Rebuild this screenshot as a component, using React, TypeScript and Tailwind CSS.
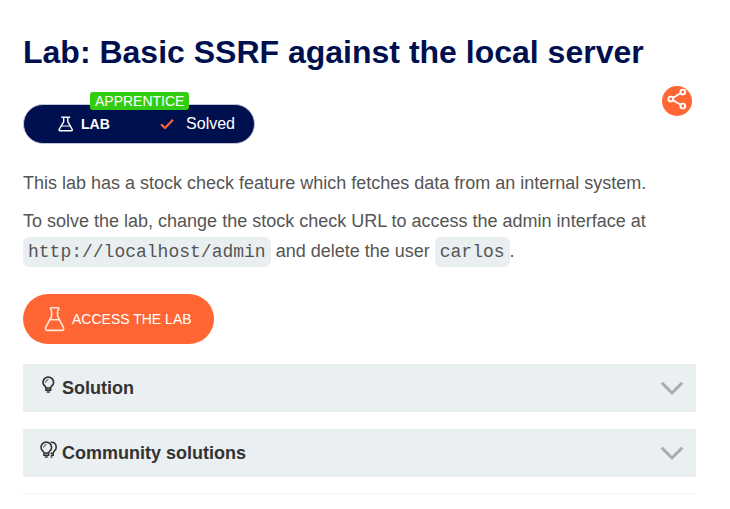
import { useState } from "react";
import type { ReactNode } from "react";

function SmallFlask() {
  return (
    <svg className="h-4 w-4 shrink-0" viewBox="0 0 16 16" fill="none" stroke="currentColor" strokeWidth="1.4" strokeLinejoin="round" strokeLinecap="round" aria-hidden="true">
      <path d="M3.8 1.2H11.6M5.7 1.2V5.6L1.2 13.4Q.8 14.8 2 14.8H13.4Q14.6 14.8 14.2 13.4L9.8 5.6V1.2" />
      <path d="M3.6 10H11.8" strokeWidth="1" />
    </svg>
  );
}

function LargeFlask() {
  return (
    <svg className="h-[26px] w-[22px] shrink-0" viewBox="0 0 22 26" fill="none" stroke="#ffe9df" strokeWidth="1.6" strokeLinejoin="round" strokeLinecap="round" aria-hidden="true">
      <path d="M7.2 1.8H14Q15 1.8 14.8 2.8L13.6 4.8V10.2L19.4 21.4Q20.4 24.2 17.8 24.4H3.4Q.8 24.2 1.8 21.4L7.6 10.2V4.8L6.4 2.8Q6.2 1.8 7.2 1.8ZM6 13.8H15.4" />
    </svg>
  );
}

function Bulb() {
  return (
    <svg className="h-[18px] w-[18px]" viewBox="0 0 18 18" fill="none" stroke="currentColor" strokeWidth="1.7" strokeLinecap="round" aria-hidden="true">
      <path d="M7 12C7 10.2 4 9.4 4 6.4A5.3 5.3 0 0 1 14.6 6.4C14.6 9.4 11.6 10.2 11.6 12ZM7 12.4V14.2H11.6V12.4M8.4 16H10.2" />
      <path d="M6.6 6.2Q6.8 4 9 3.6" strokeWidth="1" />
    </svg>
  );
}

function DoubleBulb() {
  return (
    <svg className="h-[18px] w-[18px]" viewBox="0 0 18 18" fill="none" stroke="currentColor" strokeWidth="1.6" strokeLinecap="round" aria-hidden="true">
      <path d="M5 12C5 10.2 2 9.4 2 6.4A5.3 5.3 0 0 1 12.6 6.4C12.6 9.4 9.6 10.2 9.6 12ZM5 12.4V14.2H9.6V12.4M6.4 16H8.2" />
      <path d="M4.6 6.2Q4.8 4 7 3.6" strokeWidth="1" />
      <path d="M12.2 1.3C15.4 1.3 17.2 3.6 17.2 6.4C17.2 9.4 14.2 10.2 14.2 12V14.2H12.4M12.2 12.2H14M12.2 16H12.8" />
    </svg>
  );
}

function Code({ children }: { children: ReactNode }) {
  return (
    <code className="rounded-md bg-[#e9eff1] px-[5px] py-[5px] font-['Liberation_Mono',monospace] text-lg leading-[30px]">
      {children}
    </code>
  );
}

function Panel({ title, icon, children }: { title: string; icon: ReactNode; children: ReactNode }) {
  const [open, setOpen] = useState(false);
  return (
    <section className="bg-[#eaeff2]">
      <h2>
        <button
          type="button"
          aria-expanded={open}
          onClick={() => setOpen(!open)}
          className="flex h-12 w-full cursor-pointer items-center pr-3 pl-4 text-left text-lg font-bold text-[#333332]"
        >
          <span className="mr-[5px] pb-[6px]">{icon}</span>
          {title}
          <svg className="ml-auto h-[15px] w-6" viewBox="0 0 24 15" fill="none" stroke="#a9abac" strokeWidth="3" aria-hidden="true">
            <path d="M1.8 1.8L12 12L22.2 1.8" />
          </svg>
        </button>
      </h2>
      {open && <div className="px-4 pb-4 text-lg">{children}</div>}
    </section>
  );
}

export default function App() {
  return (
    <main className="bg-white pt-8 pr-[34px] pb-4 pl-[23px] font-['Liberation_Sans',Arial,sans-serif] text-[#555554]">
      <h1 className="text-[32px] leading-10 font-bold text-[#00104f]">Lab: Basic SSRF against the local server</h1>

      <div className="flex items-start justify-between pr-1">
        <div className="relative mt-8 flex h-10 w-[232px] items-center rounded-full border border-[#c5c8d8] bg-[#00104f] pr-[19px] pl-[34px] text-white">
          <span className="absolute -top-[13px] left-[66px] rounded-[3px] bg-[#32cd10] px-[5px] text-sm leading-[18px]">APPRENTICE</span>
          <SmallFlask />
          <span className="ml-[7px] text-sm font-bold">LAB</span>
          <svg className="mr-3 ml-auto h-3 w-[14px]" viewBox="0 0 14 12" fill="none" stroke="#ff6633" strokeWidth="2" aria-hidden="true">
            <path d="M1 6.2L5 10L13 1.8" />
          </svg>
          <span className="text-base">Solved</span>
        </div>
        <button type="button" aria-label="Share" className="mt-[14px] h-[30px] w-[30px] cursor-pointer rounded-full bg-[#ff6633]">
          <svg className="h-[30px] w-[30px]" viewBox="0 0 30 30" fill="none" stroke="white" strokeWidth="1.9" aria-hidden="true">
            <path d="M11 11.8L18.6 7.2M11 14.2L18.6 18.8" />
            <circle cx="8.8" cy="13" r="2.4" />
            <circle cx="20.8" cy="6" r="2.4" />
            <circle cx="20.8" cy="20" r="2.4" />
          </svg>
        </button>
      </div>

      <div className="mt-6 flex flex-col gap-2 text-lg leading-[30px]">
        <p>This lab has a stock check feature which fetches data from an internal system.</p>
        <p>
          To solve the lab, change the stock check URL to access the admin interface at <Code>http://localhost/admin</Code> and delete the user <Code>carlos</Code>.
        </p>
      </div>

      <a href="#lab" className="mt-[27px] flex h-[50px] w-fit items-center gap-[6px] rounded-full bg-[#ff6633] pr-[22px] pl-[21px] text-sm text-white">
        <LargeFlask />
        ACCESS THE LAB
      </a>

      <div className="mt-5 flex flex-col gap-[17px]">
        <Panel title="Solution" icon={<Bulb />}>Solution</Panel>
        <Panel title="Community solutions" icon={<DoubleBulb />}>Community solutions</Panel>
      </div>
      <hr className="mt-4 border-[#f2f3f4]" />
    </main>
  );
}
